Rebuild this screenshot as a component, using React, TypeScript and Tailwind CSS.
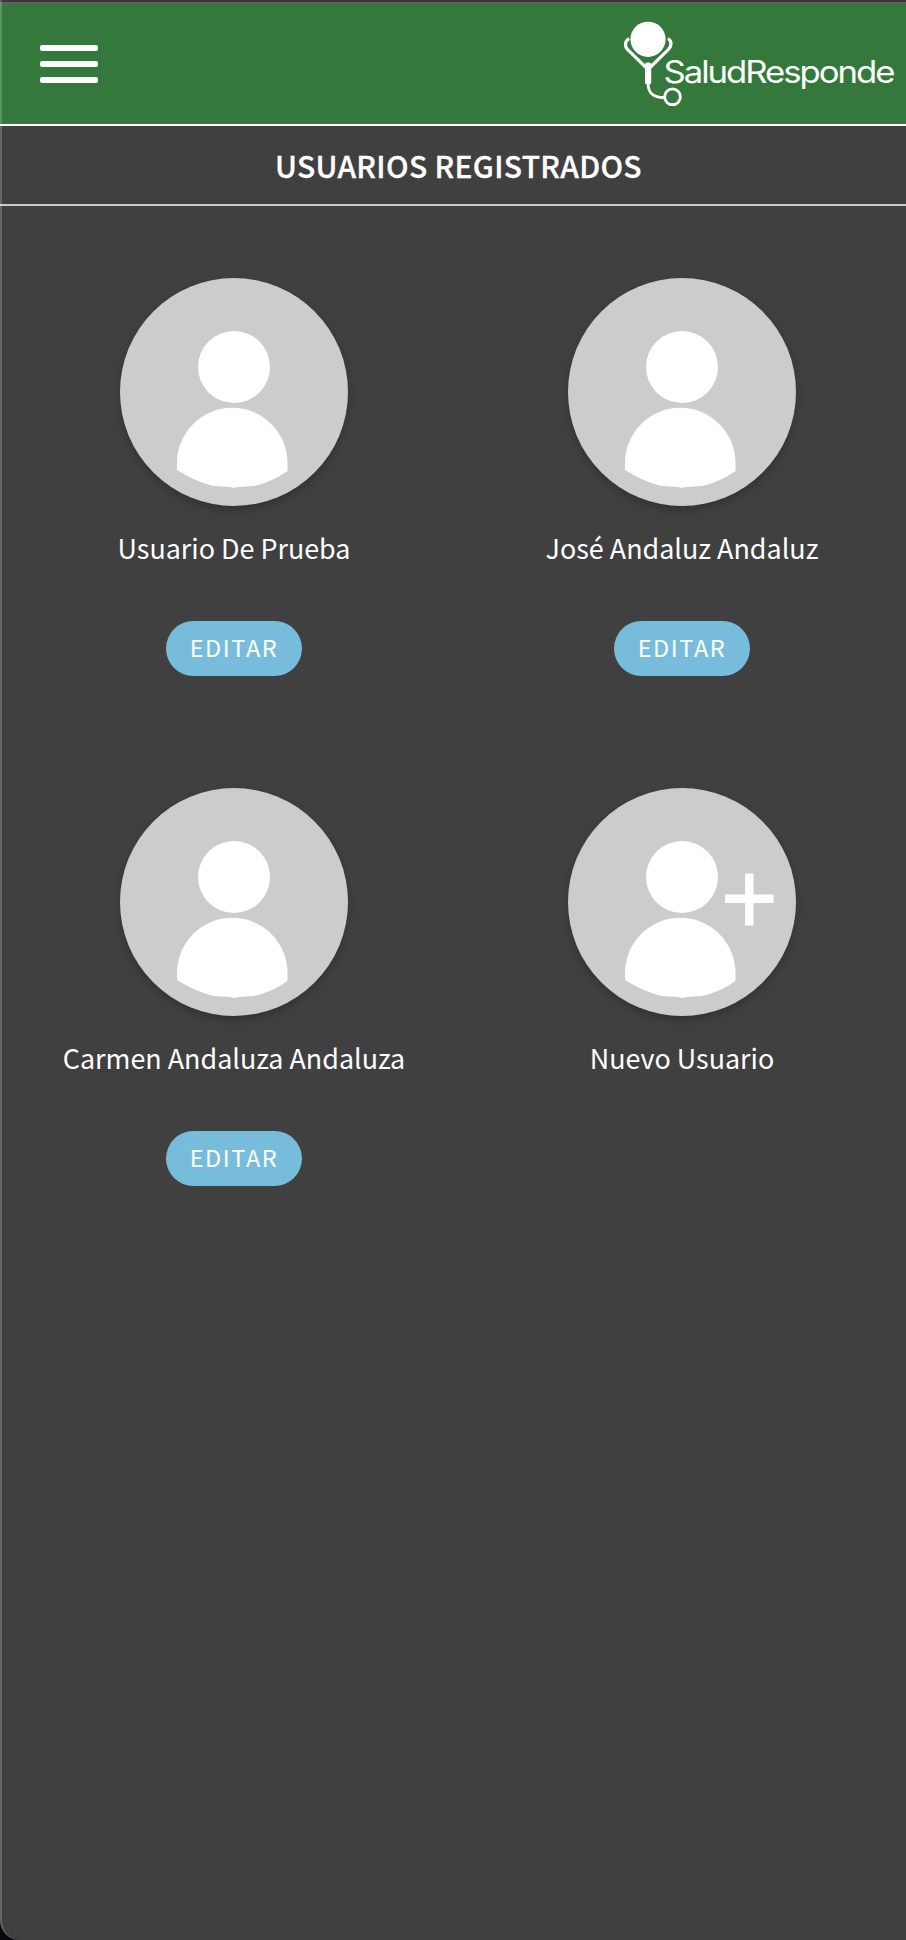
type User = { name: string; isNew?: boolean };

const USERS: User[] = [
  { name: 'Usuario De Prueba' },
  { name: 'José Andaluz Andaluz' },
  { name: 'Carmen Andaluza Andaluza' },
  { name: 'Nuevo Usuario', isNew: true },
];

function MenuButton() {
  return (
    <button aria-label="Menú" className="flex h-[38px] w-[58px] flex-col justify-between">
      <span className="h-[6.4px] w-full rounded-[2px] bg-white" />
      <span className="h-[6.4px] w-full rounded-[2px] bg-white" />
      <span className="h-[6.4px] w-full rounded-[2px] bg-white" />
    </button>
  );
}

/** Stethoscope figure plus the brand name. */
function Logo() {
  return (
    <svg viewBox="0 0 276 90" className="h-[90px] w-[276px]" aria-label="SaludResponde">
      <g fill="none" stroke="#fff">
        <path d="M9 21.5 C4.5 24.5 4.5 29.5 8 32.8 L27 51.5 M48 21.5 C52.5 24.5 51.5 29.5 48 32.8 L29 51.5" strokeWidth="3.2" />
        <path d="M28 66 C28 76 33 80.5 44 80.5" strokeWidth="2.8" />
        <circle cx="52.5" cy="79.8" r="7.9" strokeWidth="2.8" />
      </g>
      <circle cx="28" cy="22.3" r="17.6" fill="#fff" />
      <rect x="25" y="45.5" width="6.2" height="22" rx="2" fill="#fff" />
      {/* stretched sideways with tight spacing, like the brand lettering */}
      <text
        x="38.9"
        y="66.5"
        transform="scale(1.12 1)"
        textLength="207"
        fill="#fff"
        className="font-['Inter',sans-serif] text-[31px] font-normal"
      >
        SaludResponde
      </text>
    </svg>
  );
}

function Avatar({ isNew }: { isNew?: boolean }) {
  return (
    <div className="size-[228px] shrink-0 rounded-full bg-[#ccc] shadow-[0_4px_10px_rgba(0,0,0,0.22)]">
      <svg viewBox="0 0 228 228" className="size-full" fill="#fff">
        <circle cx="114" cy="89" r="36" />
        <path d="M57 192 V185 A55.25 55.25 0 0 1 167.5 185 V193 Q152 204 134 208 L118 209 L114 210 L110 209 L94 208 Q76 204 57 192 Z" />
        {isNew && <path d="M157 106.5 H177 V85.5 H185.5 V106.5 H205.5 V115 H185.5 V137.5 H177 V115 H157 Z" />}
      </svg>
    </div>
  );
}

function UserCard({ user }: { user: User }) {
  return (
    <div className="flex h-[510px] flex-col items-center">
      <Avatar isNew={user.isNew} />
      <p className="mt-[22px] h-10 whitespace-nowrap text-[26.9px] leading-10">{user.name}</p>
      {!user.isNew && (
        <button className="mt-[53px] h-[55px] w-[136px] rounded-full bg-[#78bcdc] text-[23.5px] leading-[53px] tracking-[1.6px]">
          <span className="block h-[55px]">EDITAR</span>
        </button>
      )}
    </div>
  );
}

export default function App() {
  return (
    <div className="h-[1940px] w-[906px] overflow-hidden bg-[#08080f] font-['Noto_Sans_CJK_JP','Noto_Sans_CJK_SC',sans-serif] text-white">
      <div className="relative h-full rounded-bl-[20px] bg-[#404040]">
        <div className="h-1 border-b-2 border-[#5f5f62] bg-[#36363b]" />
        <header className="flex h-[122px] items-start justify-between border-b-2 border-white bg-[#34793b] pl-10 pr-[10px]">
          <div className="pt-[41px]">
            <MenuButton />
          </div>
          <div className="pt-[13px]">
            <Logo />
          </div>
        </header>
        <h1 className="h-20 border-b-2 border-[#ccc] pl-[11px] text-center text-[30px] font-medium leading-[78px] tracking-[0.32px] [-webkit-text-stroke:0.3px_white]">
          USUARIOS REGISTRADOS
        </h1>
        <main className="grid grid-cols-2 pl-[10px] pt-[72px]">
          {USERS.map((u) => (
            <UserCard key={u.name} user={u} />
          ))}
        </main>
        {/* device edge highlight */}
        <div className="pointer-events-none absolute inset-0 rounded-bl-[20px] border-l-2 border-white/20" />
      </div>
    </div>
  );
}
